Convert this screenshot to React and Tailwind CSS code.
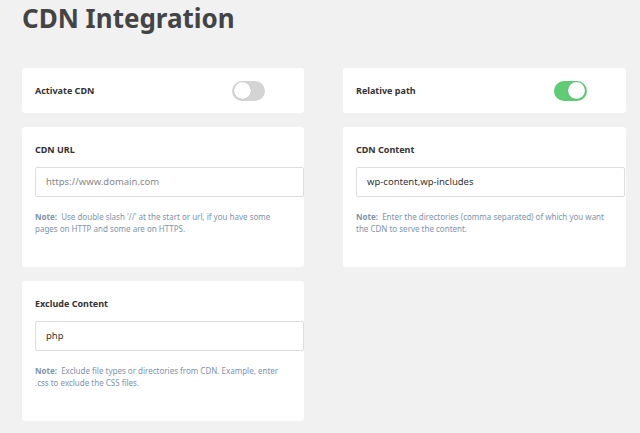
const Toggle = ({ on }) => (
  <div className={`w-[33px] h-[20px] rounded-full flex items-center px-[2px] ${on ? "bg-[#5dcc74] justify-end" : "bg-[#d4d4d4] justify-start"}`}>
    <div className="w-[17px] h-[17px] rounded-full bg-white shadow-[0_0_1px_rgba(0,0,0,0.3)]" />
  </div>
);

const ToggleCard = ({ label, on }) => (
  <div className="bg-white rounded-[3px] h-[45px] flex items-center pl-[13px] pr-[39px] justify-between">
    <span className="text-[9px] font-bold text-[#333]">{label}</span>
    <Toggle on={on} />
  </div>
);

const FieldCard = ({ label, value, placeholder, note }) => (
  <div className="bg-white rounded-[3px] h-[140px] pl-[13px] pt-[18px]">
    <div className="text-[9px] leading-[10px] font-bold text-[#333] mb-[12px]">{label}</div>
    <div className={`w-[269px] h-[30px] border border-[#ddd] rounded-[2px] flex items-center px-[10px] text-[9.5px] ${value ? "text-[#333]" : "text-[#888]"}`}>
      {value || placeholder}
    </div>
    <p className="mt-[14px] pr-[20px] text-[8px] leading-[12px] text-[#8093aa]">
      <span className="font-bold">Note:</span>{"\u00a0 "}{note}
    </p>
  </div>
);

export default function App() {
  return (
    <div className="w-[640px] h-[433px] overflow-hidden bg-[#f1f1f1] font-[family-name:'Liberation_Sans',Arial,sans-serif]">
      <h1 className="pl-[22px] pt-[2px] text-[26px] leading-[32px] font-bold text-[#444]">CDN Integration</h1>
      <div className="mt-[34px] pl-[22px] grid grid-cols-[282px_283px] gap-x-[39px] gap-y-[14px] items-start">
        <ToggleCard label="Activate CDN" on={false} />
        <ToggleCard label="Relative path" on={true} />
        <FieldCard label="CDN URL" placeholder="https://www.domain.com" note="Use double slash '//' at the start or url, if you have some pages on HTTP and some are on HTTPS." />
        <FieldCard label="CDN Content" value="wp-content,wp-includes" note="Enter the directories (comma separated) of which you want the CDN to serve the content." />
        <FieldCard label="Exclude Content" value="php" note="Exclude file types or directories from CDN. Example, enter .css to exclude the CSS files." />
      </div>
    </div>
  );
}
